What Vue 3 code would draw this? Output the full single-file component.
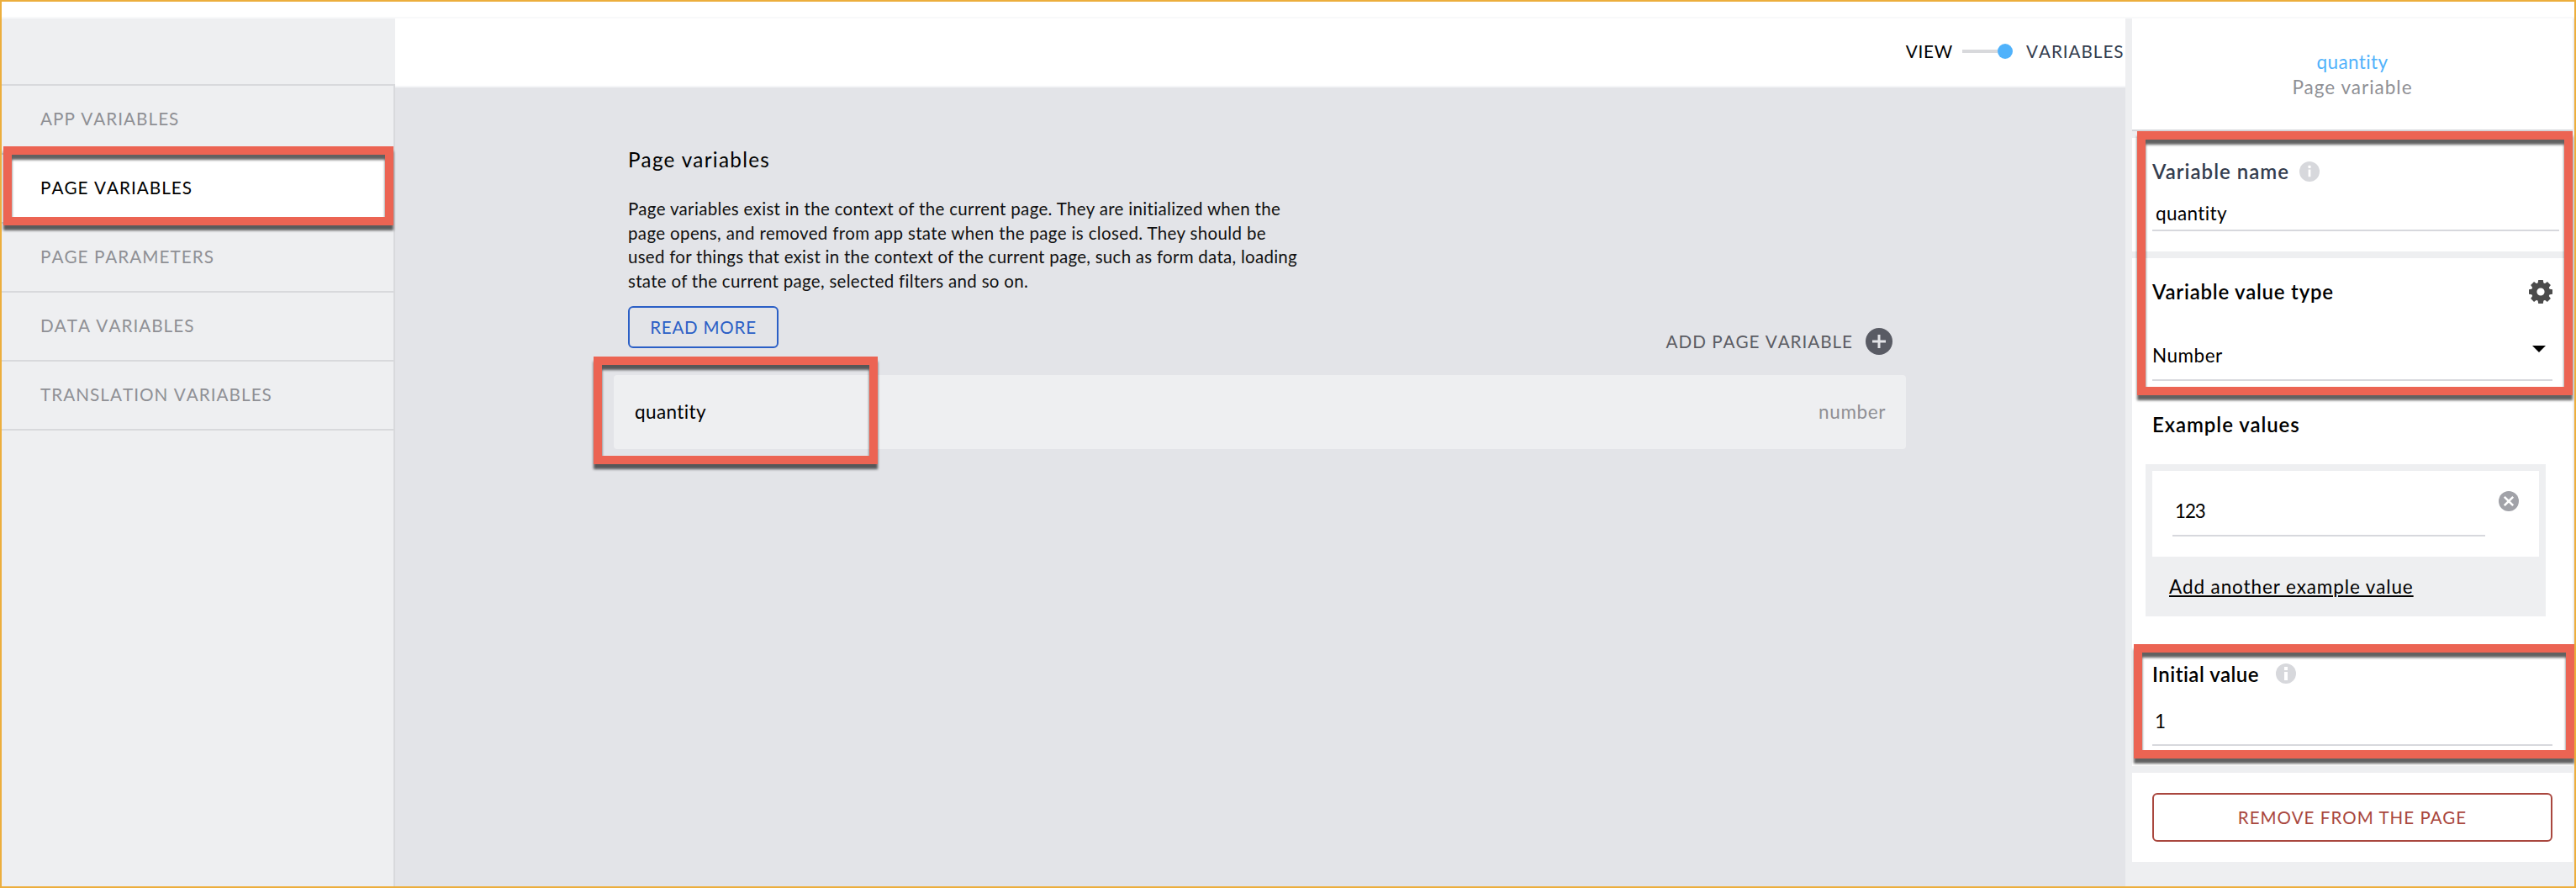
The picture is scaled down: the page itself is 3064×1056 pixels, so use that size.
<script setup>
const navItems = [
  { label: 'APP VARIABLES' },
  { label: 'PAGE VARIABLES', active: true },
  { label: 'PAGE PARAMETERS' },
  { label: 'DATA VARIABLES' },
  { label: 'TRANSLATION VARIABLES' },
]
const description = [
  'Page variables exist in the context of the current page. They are initialized when the',
  'page opens, and removed from app state when the page is closed. They should be',
  'used for things that exist in the context of the current page, such as form data, loading',
  'state of the current page, selected filters and so on.',
]
const teeth = [0, 45, 90, 135, 180, 225, 270, 315]
</script>

<template>
  <div class="app">
    <div class="strip"></div>
    <div class="body">
      <aside class="sidebar">
        <div class="side-head"></div>
        <nav class="nav">
          <a v-for="n in navItems" :key="n.label" class="nav-item" :class="{ active: n.active }">{{ n.label }}</a>
        </nav>
      </aside>

      <main class="main">
        <header class="topbar">
          <span class="view">VIEW</span>
          <span class="switch"><i class="track"></i><i class="knob"></i></span>
          <span class="vars">VARIABLES</span>
        </header>
        <section class="content">
          <h1 class="title">Page variables</h1>
          <p class="desc"><span v-for="(l, i) in description" :key="i" :class="'l' + i">{{ l }}</span></p>
          <div class="actions">
            <button class="read">READ MORE</button>
            <div class="add">
              <span>ADD PAGE VARIABLE</span>
              <svg width="32" height="32" viewBox="0 0 32 32">
                <circle cx="16" cy="16" r="16" fill="#595b64" />
                <path d="M16 8v16M8 16h16" stroke="#e3e4e8" stroke-width="3" />
              </svg>
            </div>
          </div>
          <div class="row">
            <span class="row-name">quantity</span>
            <span class="row-type">number</span>
          </div>
        </section>
      </main>

      <aside class="panel">
        <div class="panel-head">
          <div class="ph-name">quantity</div>
          <div class="ph-type">Page variable</div>
        </div>

        <div class="card card-name">
          <div class="label dark">
            <span class="t-name">Variable name</span>
            <svg class="info" width="24" height="24" viewBox="0 0 24 24">
              <circle cx="12" cy="12" r="12" fill="#d7d8dc" />
              <rect x="10.4" y="4.8" width="3.2" height="3.2" rx="1" fill="#fff" />
              <rect x="10.6" y="9.6" width="2.8" height="8.6" fill="#fff" />
            </svg>
          </div>
          <div class="field name-field"><span>quantity</span></div>
        </div>

        <div class="card card-type">
          <div class="label spread">
            <span class="t-type">Variable value type</span>
            <svg class="gear" width="28" height="28" viewBox="-14 -14 28 28">
              <path v-for="a in teeth" :key="a" d="M-3.8 -8L-2.8 -14H2.8L3.8 -8Z" fill="#4b4b4b" :transform="`rotate(${a})`" />
              <circle r="7.8" fill="none" stroke="#4b4b4b" stroke-width="6.4" />
            </svg>
          </div>
          <div class="select">
            <span>Number</span>
            <svg width="16" height="8" viewBox="0 0 16 8"><path d="M0 0H16L8 8Z" fill="#000" /></svg>
          </div>
          <div class="label ex"><span class="t-ex">Example values</span></div>
          <div class="examples">
            <div class="example">
              <div class="ex-input"><span>123</span></div>
              <svg class="clear" width="24" height="24" viewBox="0 0 24 24">
                <circle cx="12" cy="12" r="12" fill="#a1a2a8" />
                <path d="M6.8 6.8L17.2 17.2M17.2 6.8L6.8 17.2" stroke="#fff" stroke-width="2.6" />
              </svg>
            </div>
            <a class="add-link">Add another example value</a>
          </div>
          <div class="label init">
            <span class="t-init">Initial value</span>
            <svg class="info" width="24" height="24" viewBox="0 0 24 24">
              <circle cx="12" cy="12" r="12" fill="#d7d8dc" />
              <rect x="10" y="4" width="4" height="4" fill="#fff" />
              <rect x="10" y="10" width="4" height="10" fill="#fff" />
            </svg>
          </div>
          <div class="field init-field"><span>1</span></div>
        </div>

        <div class="card card-remove">
          <button class="remove">REMOVE FROM THE PAGE</button>
        </div>
      </aside>
    </div>

    <div class="mark m-nav"></div>
    <div class="mark m-row"></div>
    <div class="mark m-type"></div>
    <div class="mark m-init"></div>
  </div>
</template>

<style>
body { margin: 0; }
</style>

<style scoped>
* { box-sizing: border-box; }
.app {
  position: relative;
  width: 3064px;
  height: 1056px;
  border: 2px solid #ecae3d;
  background: #fff;
  font-family: Lato, "Open Sans", sans-serif;
  color: #000;
  display: flex;
  flex-direction: column;
  overflow: hidden;
  white-space: nowrap;
}
.strip { height: 20px; flex: none; border-bottom: 2px solid #f8f9fa; }
.body { flex: 1; display: flex; min-height: 0; }

.sidebar { width: 468px; background: #eeeff1; display: flex; flex-direction: column; flex: none; }
.side-head { height: 78px; flex: none; }
.nav { flex: 1; border-top: 2px solid #d8d9dc; border-right: 2px solid #d8d9dc; }
.nav-item {
  display: block;
  height: 82px;
  border-bottom: 2px solid #d8d9dc;
  padding-left: 46px;
  font-size: 20.7px;
  line-height: 79px;
  letter-spacing: 1.02px;
  font-kerning: none;
  color: #8f9095;
}
.nav-item.active { background: #fff; color: #000; }

.main { width: 2058px; flex: none; background: #e3e4e8; display: flex; flex-direction: column; }
.topbar {
  height: 82px;
  flex: none;
  background: #fff;
  border-bottom: 2px solid #f5f6f8;
  display: flex;
  justify-content: flex-end;
  align-items: center;
  padding-bottom: 2px;
  font-size: 20.7px;
  letter-spacing: 0.8px;
  font-kerning: none;
}
.view { margin-right: 11px; }
.switch { display: flex; align-items: center; width: 60px; margin-right: 16px; }
.track { width: 42px; height: 4px; background: #d8d9dc; }
.knob { width: 18px; height: 18px; border-radius: 50%; background: #50b2fb; }
.vars { color: #343d4e; width: 118px; letter-spacing: 0.95px; }

.content { padding: 71px 261px 0 260px; }
.title { margin: 0 0 0 17px; font-size: 24.3px; line-height: 30px; font-weight: 400; letter-spacing: 1.3px; }
.desc { margin: 29px 0 0 17px; font-size: 20.5px; line-height: 28.6px; letter-spacing: 0.3px; color: #111; }
.desc span { display: block; }
.desc .l0 { letter-spacing: 0.33px; }
.desc .l1 { letter-spacing: 0.36px; }
.desc .l2 { letter-spacing: 0.27px; }
.actions { display: flex; justify-content: space-between; align-items: flex-start; margin: 15.6px 16px 0 17px; height: 82px; }
button { font-family: inherit; background: transparent; padding: 0; white-space: nowrap; }
.read {
  width: 179px; height: 50px;
  border: 2px solid #2b5fc6; border-radius: 6px;
  color: #2b5fc6; font-size: 20.5px; letter-spacing: 0.8px;
  padding-top: 1px;
}
.add { display: flex; align-items: center; gap: 15px; margin-top: 26px; font-size: 20.7px; letter-spacing: 0.95px; font-kerning: none; color: #5b5c63; }
.row {
  height: 88px; border-radius: 4px; background: #eeeff1;
  display: flex; justify-content: space-between; align-items: center;
  padding: 0 24px 0 25px; font-size: 22.5px; letter-spacing: 0.4px;
}
.row-type { color: #8f9095; letter-spacing: 0.6px; }

.panel { flex: 1; background: #eeeff1; padding: 0 2px 0 8px; }
.panel-head { height: 134px; background: #fff; border-bottom: 2px solid #d5d6da; padding-top: 37px; text-align: center; font-size: 22.5px; line-height: 30px; letter-spacing: 0.4px; }
.ph-name { color: #50b2fb; }
.ph-type { color: #8f9095; letter-spacing: 1px; }
.card { background: #fff; margin-top: 8px; padding: 25px 24px 0; }
.label { display: flex; align-items: center; height: 30px; font-size: 24px; line-height: 30px; font-weight: 600; letter-spacing: 0.78px; }
.dark { color: #343d4e; }
.spread { justify-content: space-between; }
.t-name { width: 175px; letter-spacing: 1px; }
.t-ex { letter-spacing: 0.95px; }
.t-init { width: 147px; letter-spacing: 0.5px; padding-top: 1px; }
.field { border-bottom: 2px solid #d7d8dd; font-size: 22.5px; letter-spacing: 0.4px; padding-left: 4px; }
.card-name { height: 135px; padding-right: 16px; }
.name-field { margin-top: 16px; height: 40px; line-height: 38px; }
.card-type { height: 604px; }
.select {
  margin-top: 45px; height: 46px; border-bottom: 2px solid #d7d8dd;
  display: flex; justify-content: space-between; align-items: flex-start;
  font-size: 22.5px; line-height: 32px; letter-spacing: 0.5px;
}
.select svg { margin: 6px 8px 0 0; }
.spread + .select { margin-top: 45px; }
.select svg { margin-top: 4px; }
.ex { margin-top: 37px; }
.examples { margin: 32px 8px 0 -8px; height: 181px; background: #eeeff1; padding: 8px; }
.example { height: 102px; background: #fff; padding: 30px 24px 0; display: flex; align-items: flex-start; justify-content: space-between; }
.ex-input { width: 372px; height: 48px; border-bottom: 2px solid #d7d8dd; font-size: 22.3px; line-height: 36px; letter-spacing: -1px; padding-left: 3px; }
.clear { margin-top: -6px; }
.add-link { display: inline-block; margin: 21px 0 0 20px; font-size: 22.5px; line-height: 30px; letter-spacing: 0.9px; text-decoration: underline; text-decoration-thickness: 2px; text-underline-offset: 2px; }
.init { margin-top: 53px; }
.init-field { margin-top: 23px; height: 48px; line-height: 37px; padding-left: 3px; }
.card-remove { height: 106px; padding-top: 24px; }
.remove { width: 476px; height: 58px; border: 2px solid #a9473e; border-radius: 6px; color: #a9473e; font-size: 20.5px; letter-spacing: 1.05px; }

/* Callout frames laid over the page */
.mark {
  position: absolute;
  border: 10px solid #ec6453;
  filter: drop-shadow(0 6px 1.5px rgba(0, 0, 0, 0.62));
}
.m-nav { left: 2px; top: 172px; width: 464px; height: 94px; }
.m-row { left: 704px; top: 422px; width: 338px; height: 128px; }
.m-type { left: 2540px; top: 154px; width: 518px; height: 314px; }
.m-init { left: 2536px; top: 764px; width: 524px; height: 136px; }
</style>
